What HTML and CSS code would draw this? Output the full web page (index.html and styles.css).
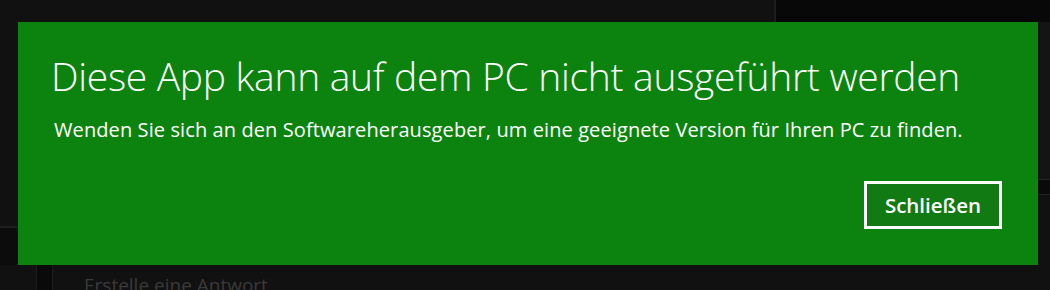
FILE: index.html
```html
<!DOCTYPE html>
<html lang="de">
<head>
<meta charset="utf-8">
<title>Dialog</title>
<link rel="stylesheet" href="styles.css">
</head>
<body>
<div class="app">
  <div class="top">
    <div class="top-left"></div>
    <div class="top-right"></div>
  </div>
  <div class="middle">
    <div class="side-left">
      <div class="side-left-a"></div>
      <div class="side-left-b"></div>
    </div>
    <div class="center"></div>
    <div class="side-right">
      <div class="sr-a"></div>
      <div class="sr-b"></div>
      <div class="sr-c"></div>
    </div>
  </div>
  <div class="bottom">
    <div class="b-left"></div>
    <div class="b-strip"></div>
    <div class="b-text">Erstelle eine Antwort</div>
  </div>

  <div class="dialog" role="dialog">
    <h1 class="title">Diese App kann auf dem PC nicht ausgeführt werden</h1>
    <p class="message">Wenden Sie sich an den Softwareherausgeber, um eine geeignete Version für Ihren PC zu finden.</p>
    <div class="actions">
      <button class="close-btn">Schließen</button>
    </div>
  </div>
</div>
</body>
</html>
```

FILE: styles.css
```css
html, body {
  margin: 0;
  padding: 0;
  background: #111111;
}
.app {
  position: relative;
  width: 1050px;
  height: 290px;
  overflow: hidden;
  background: #111111;
  font-family: "Open Sans", "Noto Sans", sans-serif;
}
.top {
  display: flex;
  height: 22px;
}
.top-left {
  width: 774px;
  background: #111111;
  border-right: 2px solid #1c1c1c;
}
.top-right {
  flex: 1;
  background: #080808;
}
.middle {
  display: flex;
  height: 243px;
}
.side-left {
  width: 18px;
  display: flex;
  flex-direction: column;
}
.side-left-a {
  height: 204px;
  background: #111111;
  border-bottom: 2px solid #1e1e1e;
}
.side-left-b {
  flex: 1;
  background: #0c0c0c;
}
.center {
  flex: 1;
}
.side-right {
  width: 12px;
  display: flex;
  flex-direction: column;
}
.sr-a {
  height: 157px;
  background: #141414;
  border-bottom: 1px solid #262626;
}
.sr-b {
  height: 14px;
  background: #0a0a0a;
  border-bottom: 1px solid #222222;
}
.sr-c {
  flex: 1;
  background: #111111;
}
.bottom {
  display: flex;
  height: 25px;
}
.b-left {
  width: 36px;
  background: #111111;
  border-right: 1px solid #1c1c1c;
}
.b-strip {
  width: 15px;
  background: #0a0a0a;
  border-right: 1px solid #1c1c1c;
}
.b-text {
  margin-left: 31px;
  padding-top: 7px;
  font-size: 19px;
  color: #3a3a3a;
  line-height: 26px;
  white-space: nowrap;
}
.dialog {
  position: absolute;
  left: 18px;
  top: 22px;
  width: 1020px;
  height: 243px;
  box-sizing: border-box;
  background: #0b830e;
  color: #ffffff;
  padding: 30px 36px 0 33px;
  display: flex;
  flex-direction: column;
}
.title {
  margin: 0;
  font-weight: 300;
  font-size: 39px;
  line-height: 48px;
  letter-spacing: -0.3px;
  white-space: nowrap;
}
.message {
  margin: 17px 0 0 3px;
  font-size: 20px;
  line-height: 26px;
  letter-spacing: 0.1px;
  white-space: nowrap;
}
.actions {
  display: flex;
  justify-content: flex-end;
  margin-top: 38px;
}
.close-btn {
  width: 138px;
  height: 48px;
  box-sizing: border-box;
  border: 3px solid #ffffff;
  background: #127a12;
  color: #ffffff;
  font-family: "Open Sans", "Noto Sans", sans-serif;
  font-weight: 600;
  font-size: 20.5px;
  line-height: 24px;
  padding: 0;
}
```
